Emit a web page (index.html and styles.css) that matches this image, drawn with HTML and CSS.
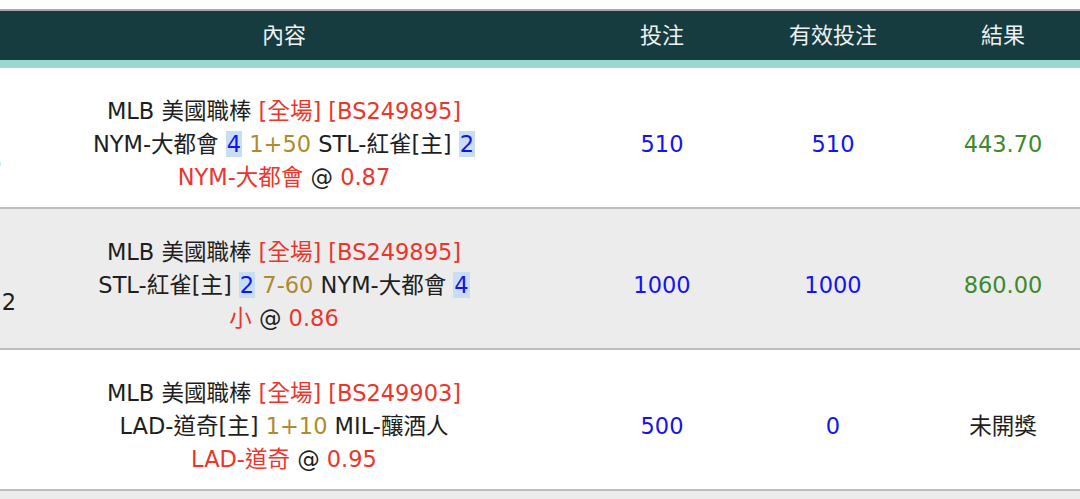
FILE: index.html
```html
<!DOCTYPE html>
<html lang="zh-Hant">
<head>
  <meta charset="utf-8" />
  <meta name="viewport" content="width=device-width, initial-scale=1.0" />
  <title>投注記錄</title>
  <link rel="stylesheet" href="styles.css">
</head>
<body>
  <table class="bets">
    <colgroup>
      <col class="col-no">
      <col class="col-detail">
      <col class="col-bet">
      <col class="col-valid">
      <col class="col-result">
    </colgroup>
    <thead>
      <tr>
        <th class="no">單號</th>
        <th>內容</th>
        <th>投注</th>
        <th>有效投注</th>
        <th>結果</th>
      </tr>
    </thead>
    <tbody>
      <tr>
        <td class="no">7/12<br>10313</td>
        <td class="detail">
          <div>MLB 美國職棒 <span class="red">[全場] [BS249895]</span></div>
          <div>NYM-大都會 <span class="score">4</span> <span class="line">1+50</span> STL-紅雀[主] <span class="score">2</span></div>
          <div><span class="red">NYM-大都會</span> @ <span class="red">0.87</span></div>
        </td>
        <td class="amount">510</td>
        <td class="amount">510</td>
        <td class="win">443.70</td>
      </tr>
      <tr class="alt">
        <td class="no">7/12<br>1033122</td>
        <td class="detail">
          <div>MLB 美國職棒 <span class="red">[全場] [BS249895]</span></div>
          <div>STL-紅雀[主] <span class="score">2</span> <span class="line">7-60</span> NYM-大都會 <span class="score">4</span></div>
          <div><span class="red">小</span> @ <span class="red">0.86</span></div>
        </td>
        <td class="amount">1000</td>
        <td class="amount">1000</td>
        <td class="win">860.00</td>
      </tr>
      <tr>
        <td class="no">7/12<br>1033</td>
        <td class="detail">
          <div>MLB 美國職棒 <span class="red">[全場] [BS249903]</span></div>
          <div>LAD-道奇[主] <span class="line">1+10</span> MIL-釀酒人</div>
          <div><span class="red">LAD-道奇</span> @ <span class="red">0.95</span></div>
        </td>
        <td class="amount">500</td>
        <td class="amount">0</td>
        <td>未開獎</td>
      </tr>
      <tr class="alt">
        <td class="no"></td>
        <td class="detail"></td>
        <td></td>
        <td></td>
        <td></td>
      </tr>
    </tbody>
  </table>
</body>
</html>
```

FILE: styles.css
```css
*, *::before, *::after {
  box-sizing: border-box;
}

body {
  margin: 0;
  padding-top: 9px;
  background: white;
  font-family: "DejaVu Sans", "Noto Sans CJK TC", sans-serif;
  font-size: 22.5px;
  color: #1e1e1e;
  overflow: hidden;
}

.bets {
  table-layout: fixed;
  width: 1212px;
  margin-left: -98px;
  border-collapse: separate;
  border-spacing: 0;
}

.col-no { width: 116px; }
.col-detail { width: 532px; }
.col-bet { width: 224px; }
.col-valid { width: 118px; }
.col-result { width: 222px; }

.bets th {
  padding: 0;
  line-height: 49px;
  font-size: 22px;
  font-weight: 400;
  color: #eef2f2;
  text-align: center;
  background-color: #173c40;
  border-top: 2px solid #a9a9a9;
  border-bottom: 8px solid #9cd8cf;
}

.bets td {
  padding: 27px 0 13px;
  line-height: 33px;
  text-align: center;
  vertical-align: middle;
  white-space: nowrap;
  border-bottom: 2px solid #bdbdbd;
}

.bets tr.alt td {
  background-color: #ececec;
}

.bets .no {
  padding-left: 12px;
}

.red {
  color: #e8372c;
}

.line {
  color: #b08a32;
}

.score {
  color: #1414ee;
  background-color: #c8def5;
  padding: 0 1px;
}

.amount {
  color: #1414ee;
}

.win {
  color: #3c8a2c;
}
```
